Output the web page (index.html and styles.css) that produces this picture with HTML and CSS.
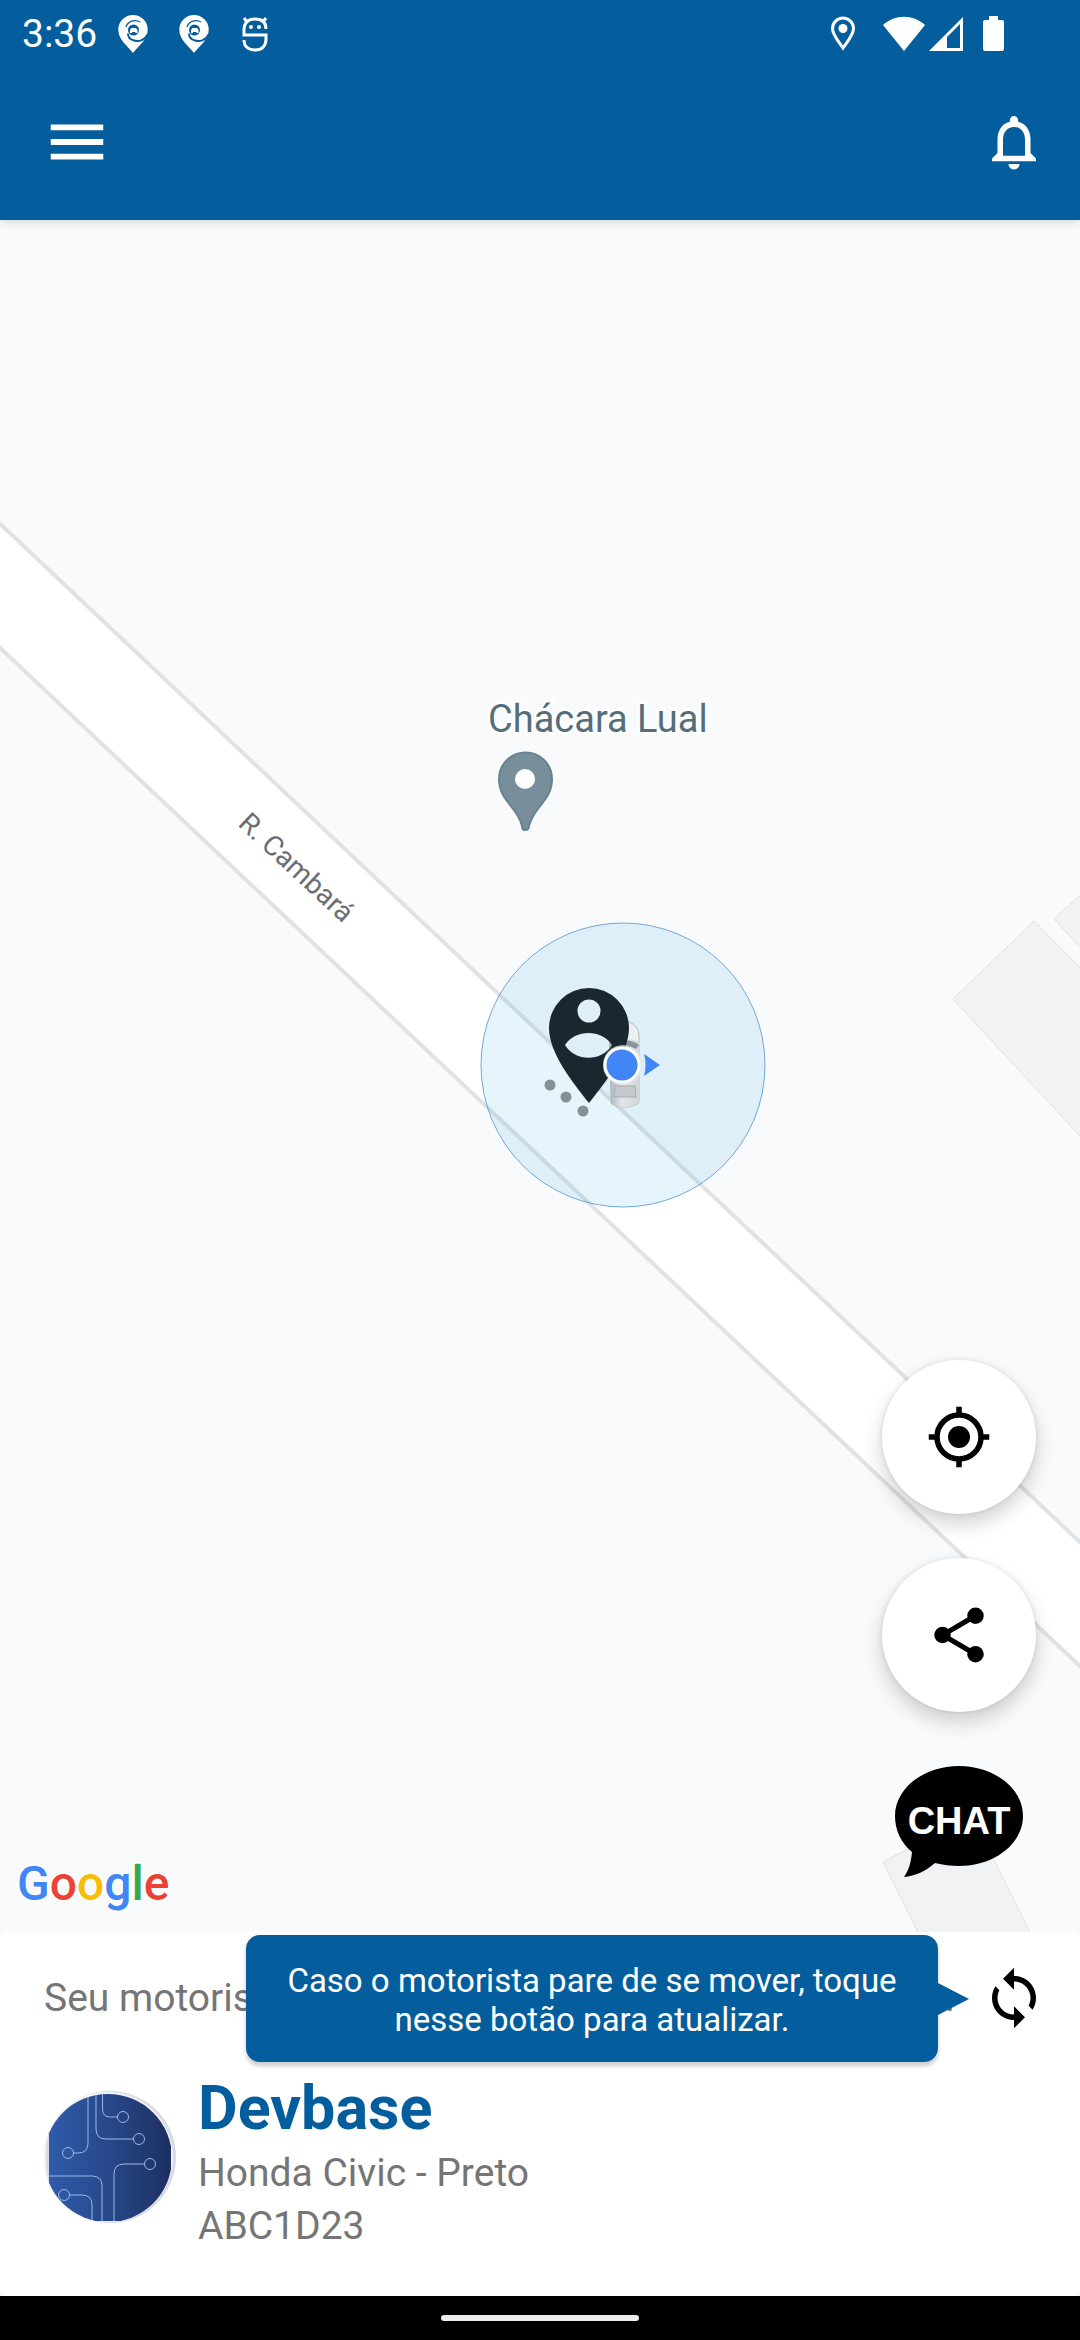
FILE: index.html
```
<!DOCTYPE html>
<html lang="pt-BR">
<head>
  <meta charset="UTF-8">
  <meta name="viewport" content="width=device-width, initial-scale=1.0">
  <title>Devbase</title>
  <link rel="stylesheet" href="styles.css">
</head>
<body>
  <header class="header">
    <div class="status-bar">
      <span class="clock">3:36</span>
      <div class="status-left">
        <svg class="status-icon" viewBox="0 0 38 38">
          <path fill="#fff" d="M19 38C14 31 4.300 25 4.300 14.700a14.700 14.700 0 0 1 29.400 0C33.700 25 24 31 19 38z"/>
          <path fill="none" stroke="#045e9e" stroke-width="1.300" d="M12 12c2-6 9-8 14-5"/>
          <path fill="none" stroke="#045e9e" stroke-width="2" d="M34 19c-3 6-9 8-14 6.500-4-1-6-4-6-7"/>
          <circle cx="19.500" cy="15" r="5.500" fill="#045e9e"/>
          <path fill="#fff" d="M16 18v-3l1.500-2h4.500l1.500 2v3h-2v-1h-3.500v1z"/>
        </svg>
        <svg class="status-icon" viewBox="0 0 38 38">
          <path fill="#fff" d="M19 38C14 31 4.300 25 4.300 14.700a14.700 14.700 0 0 1 29.400 0C33.700 25 24 31 19 38z"/>
          <path fill="none" stroke="#045e9e" stroke-width="1.300" d="M12 12c2-6 9-8 14-5"/>
          <path fill="none" stroke="#045e9e" stroke-width="2" d="M34 19c-3 6-9 8-14 6.500-4-1-6-4-6-7"/>
          <circle cx="19.500" cy="15" r="5.500" fill="#045e9e"/>
          <path fill="#fff" d="M16 18v-3l1.500-2h4.500l1.500 2v3h-2v-1h-3.500v1z"/>
        </svg>
        <svg class="status-icon" viewBox="0 0 38 38">
          <g fill="none" stroke="#fff" stroke-width="3">
            <path d="M30 14c0-7-4-10-11-10S8 8 8 15v5h22v4c0 7-4 11-11 11S8 31 8 25"/>
            <path d="M11 7L8 3M27 7l3-4"/>
          </g>
          <circle cx="15" cy="12" r="2" fill="#fff"/>
          <circle cx="23" cy="12" r="2" fill="#fff"/>
        </svg>
      </div>
      <div class="status-right">
        <svg width="26" height="36" viewBox="0 0 26 36">
          <path fill="none" stroke="#fff" stroke-width="3" d="M13 32C9 26 2.500 19 2.500 12.500a10.500 10.500 0 0 1 21 0C23.500 19 17 26 13 32z"/>
          <circle cx="13" cy="12.500" r="4.500" fill="#fff"/>
        </svg>
        <svg class="wifi" width="42" height="36" viewBox="0 0 42 36">
          <path fill="#fff" d="M21 35L0 9C12-2 30-2 42 9z"/>
        </svg>
        <svg class="signal" width="34" height="36" viewBox="0 0 34 36">
          <path fill="#fff" fill-rule="evenodd" d="M34 1v34H0zM31 8L18 21v11h13z"/>
        </svg>
        <svg width="22" height="36" viewBox="0 0 22 36">
          <path fill="#fff" d="M6 0h9v4h4q2 0 2 2v27q0 2-2 2H2q-2 0-2-2V6q0-2 2-2h4z"/>
        </svg>
      </div>
    </div>
    <div class="app-bar">
      <button class="icon-button" type="button" aria-label="Menu">
        <svg class="icon-menu" viewBox="0 0 24 24"><path fill="#fff" d="M3 18h18v-2H3v2zm0-5h18v-2H3v2zm0-7v2h18V6H3z"/></svg>
      </button>
      <button class="icon-button" type="button" aria-label="Notificações">
        <svg class="icon" viewBox="0 0 24 24"><path fill="#fff" d="M12 22c1.100 0 2-.9 2-2h-4c0 1.100.9 2 2 2zm6-6v-5c0-3.070-1.630-5.640-4.500-6.320V4c0-.83-.67-1.500-1.500-1.500s-1.500.67-1.500 1.500v.68C7.640 5.360 6 7.920 6 11v5l-2 2v1h16v-1l-2-2zm-2 1H8v-6c0-2.480 1.510-4.500 4-4.500s4 2.020 4 4.500v6z"/></svg>
      </button>
    </div>
  </header>

  <main class="map">
    <svg class="map-canvas" viewBox="0 0 1080 1712" preserveAspectRatio="xMidYMid slice">
      <defs>
        <linearGradient id="car" x1="0" x2="1" y1="0" y2="0">
          <stop offset="0" stop-color="#a9afb5"/>
          <stop offset=".4" stop-color="#e4e7ea"/>
          <stop offset="1" stop-color="#cfd4d9"/>
        </linearGradient>
      </defs>

      <!-- prédios -->
      <g fill="#f1f2f3" stroke="#dfe1e3" stroke-width="1">
        <path d="M953 779l81-78 56 57v169z"/>
        <path d="M1054 699l36-33v72z"/>
        <path d="M883 1642l89-46 63 126H923z"/>
      </g>

      <!-- rua -->
      <path fill="#fff" stroke="#e0e2e4" stroke-width="4" d="M-20 285L1100 1341v124L-20 409z"/>
      <text class="street" transform="translate(237 605) rotate(43)">R. Cambará</text>

      <!-- local -->
      <text class="place" x="488" y="512">Chácara Lual</text>
      <path fill="#788f9b" stroke="#678290" stroke-width="2" d="M525 610c-2 0-3-2-3-4-4-19-23-25-23-47a26.500 26.500 0 0 1 53 0c0 22-19 28-23 47 0 2-1 4-4 4z"/>
      <circle cx="525" cy="559" r="10" fill="#fff"/>

      <circle cx="623" cy="845" r="142" fill="#1e9adf" fill-opacity=".11" stroke="#3f86c6" stroke-opacity=".7"/>

      <!-- carro -->
      <path fill="#edf0f3" stroke="#b4babf" d="M611 815c2-18 26-18 28 0v66c0 8-28 8-28 0z"/>
      <path fill="url(#car)" d="M609 822c8-4 22-4 31 0l-1 62c-6 4-23 4-28 0z"/>
      <path fill="#8b939a" d="M612 825c8-6 20-6 27 0l-3 4c-6-3-15-3-21 0z"/>
      <path fill="#c4c9cd" stroke="#a5abb0" d="M615 866h20l1 11h-22z"/>

      <!-- passageiro -->
      <g fill="#84919a">
        <circle cx="550" cy="865" r="5.500"/>
        <circle cx="566" cy="877" r="5.500"/>
        <circle cx="583" cy="891" r="5.500"/>
      </g>
      <path fill="#1b272e" fill-rule="evenodd" d="M589 883c-16-20-40-50-40-75a40 40 0 0 1 80 0c0 25-24 55-40 75zM589 779.500a11.500 11.500 0 1 0 0 23 11.500 11.500 0 0 0 0-23zM565 825c10 17 37 17 47 0-10-16-37-16-47 0z"/>

      <!-- posição atual -->
      <path fill="#4285f4" d="M644 834l16 11-16 11q3-11 0-22z"/>
      <circle cx="623" cy="845" r="20" fill="#dfe5ea" fill-opacity=".7"/>
      <circle cx="622" cy="845" r="17" fill="#4285f4" stroke="#fff" stroke-width="3"/>

      <text class="google" x="17" y="1680"><tspan fill="#4285f4">G</tspan><tspan fill="#ea4335">o</tspan><tspan fill="#fbbc05">o</tspan><tspan fill="#4285f4">g</tspan><tspan fill="#34a853">l</tspan><tspan fill="#ea4335">e</tspan></text>
    </svg>

    <div class="map-actions">
      <button class="fab" type="button" aria-label="Minha localização">
        <svg class="icon" viewBox="0 0 24 24">
          <circle cx="12" cy="12" r="4"/>
          <circle cx="12" cy="12" r="8" fill="none" stroke="#000" stroke-width="2"/>
          <path d="M11 1h2v3h-2zM11 20h2v3h-2zM1 11h3v2H1zM20 11h3v2h-3z"/>
        </svg>
      </button>
      <button class="fab" type="button" aria-label="Compartilhar">
        <svg class="icon" viewBox="0 0 24 24">
          <path fill="none" stroke="#000" stroke-width="1.800" d="M18 5L6 12l12 7"/>
          <circle cx="18" cy="5" r="3"/>
          <circle cx="6" cy="12" r="3"/>
          <circle cx="18" cy="19" r="3"/>
        </svg>
      </button>
      <button class="chat" type="button">
        <svg width="128" height="112" viewBox="0 0 128 112">
          <path d="M64 0c35 0 64 22 64 50s-29 50-64 50c-8 0-16-1-24-3-9 8-20 13-31 14 5-7 7-15 8-25C6 77 0 64 0 50 0 22 29 0 64 0z"/>
          <text class="chat-text" x="64" y="68" text-anchor="middle">CHAT</text>
        </svg>
      </button>
    </div>
  </main>

  <section class="panel">
    <div class="panel-status">
      <p class="message"><span>Seu motorista</span><span>.</span></p>
      <button class="icon-button" type="button" aria-label="Atualizar">
        <svg class="icon" viewBox="0 0 24 24"><path d="M12 4V1L8 5l4 4V6c3.310 0 6 2.690 6 6 0 1.010-.25 1.970-.7 2.800l1.460 1.460C19.540 15.030 20 13.570 20 12c0-4.420-3.580-8-8-8zm0 14c-3.310 0-6-2.690-6-6 0-1.010.25-1.970.7-2.800L5.240 7.740C4.460 8.970 4 10.430 4 12c0 4.420 3.580 8 8 8v3l4-4-4-4v3z"/></svg>
      </button>
      <div class="tooltip" role="tooltip">Caso o motorista pare de se mover, toque nesse botão para atualizar.</div>
    </div>
    <div class="driver">
      <svg class="avatar" viewBox="0 0 132 132">
        <defs>
          <linearGradient id="photo">
            <stop offset="0" stop-color="#2f5baa"/>
            <stop offset=".5" stop-color="#27488a"/>
            <stop offset="1" stop-color="#1e2f61"/>
          </linearGradient>
          <clipPath id="round"><circle cx="64" cy="67" r="64"/></clipPath>
        </defs>
        <circle cx="66" cy="66" r="66" fill="#d9dbe2"/>
        <circle cx="64" cy="66" r="65" fill="#f4f5fa"/>
        <path d="M5 39Q-2 66 5 93z" fill="#d9dbe2"/>
        <g clip-path="url(#round)">
          <rect x="5" y="3" width="122" height="127" fill="url(#photo)"/>
          <g fill="none" stroke="#9db8e6" stroke-width="1">
            <path d="M44 3v49q0 10-10 10h-5M52 3v35q0 10 10 10h27M58.500 3v15q0 8 8 8h7M5 85h43q10 0 10 10v35M26 104h12q10 0 10 10v16M100 73H80q-10 0-10 10v47"/>
            <circle cx="24" cy="62" r="5.500"/>
            <circle cx="95" cy="48" r="5.500"/>
            <circle cx="79" cy="26" r="5.500"/>
            <circle cx="20" cy="104" r="5.500"/>
            <circle cx="106" cy="73" r="5.500"/>
          </g>
        </g>
      </svg>
      <div>
        <h1 class="driver-name">Devbase</h1>
        <p class="driver-info">Honda Civic - Preto</p>
        <p class="driver-info">ABC1D23</p>
      </div>
    </div>
  </section>

  <footer class="nav-bar"><div class="nav-handle"></div></footer>
</body>
</html>
```
FILE: styles.css
```
* {
  box-sizing: border-box;
}
body {
  margin: 0;
  min-height: 100vh;
  display: flex;
  flex-direction: column;
  font-family: Roboto, "Liberation Sans", sans-serif;
  font-size: 39px;
  background-color: #f8fafc;
  color: #757575;
}
h1, p {
  margin: 0;
}
svg {
  display: block;
}
button {
  border: none;
  padding: 0;
  background: none;
  cursor: pointer;
}

/* topo */
.header {
  position: relative;
  z-index: 1;
  padding-bottom: 4px;
  background-color: #045e9e; /* azul */
  color: #fff;
  box-shadow: 0 2px 10px rgba(0, 0, 0, 0.15);
}
.status-bar {
  display: flex;
  align-items: center;
  height: 68px;
  padding: 0 75px 0 22px;
}
.status-left {
  display: flex;
  gap: 23px;
  margin-left: 17px;
}
.status-icon {
  width: 38px;
  height: 38px;
}
.status-right {
  display: flex;
  align-items: center;
  margin-left: auto;
}
.wifi {
  margin-left: 27px;
}
.signal {
  margin: 0 20px 0 4px;
}
.app-bar {
  display: flex;
  align-items: center;
  justify-content: space-between;
  height: 148px;
  padding: 0 33px 0 42px;
}
.icon {
  width: 66px;
  height: 66px;
}
.icon-menu {
  width: 70px;
  height: 70px;
}

/* mapa */
.map {
  position: relative;
  flex: 1;
  display: flex;
  flex-direction: column;
  align-items: flex-end;
  justify-content: flex-end;
  padding: 44px;
  overflow: hidden;
}
.map-canvas {
  position: absolute;
  inset: 0;
  width: 100%;
  height: 100%;
}
.street {
  font-size: 28px;
  fill: #6b6e72;
}
.place {
  font-size: 38px;
  fill: #546e7a;
  stroke: #fff;
  stroke-width: 5px;
  paint-order: stroke;
}
.google {
  font-size: 48px;
  font-weight: 500;
  stroke: #fff;
  stroke-width: 3px;
  paint-order: stroke;
}
.map-actions {
  position: relative;
  display: flex;
  flex-direction: column;
  gap: 44px;
}
.fab {
  display: flex;
  align-items: center;
  justify-content: center;
  width: 154px;
  height: 154px;
  border-radius: 50%;
  background-color: #fff;
  box-shadow: 0 10px 20px rgba(0, 0, 0, 0.18), 0 0 5px rgba(0, 0, 0, 0.1);
}
.chat {
  display: flex;
  align-items: center;
  justify-content: center;
  height: 132px;
}
.chat-text {
  font-family: "Liberation Sans", Arial, sans-serif;
  font-size: 38px;
  font-weight: bold;
  fill: #fff;
}

/* motorista */
.panel {
  padding: 33px 33px 43px 44px;
  border-radius: 8px;
  background-color: #fff;
}
.panel-status {
  position: relative;
  display: flex;
  align-items: center;
  justify-content: space-between;
  margin-bottom: 38px;
}
.message {
  flex: 1;
  display: flex;
  justify-content: space-between;
  margin-right: 26px;
}
.tooltip {
  position: absolute;
  top: -30px;
  right: 109px;
  width: 692px;
  padding: 26px 36px 23px;
  border-radius: 14px;
  background-color: #045e9e;
  box-shadow: 0 4px 4px rgba(0, 0, 0, 0.2);
  color: #fff;
  font-size: 33px;
  line-height: 39px;
  text-align: center;
}
.tooltip::after {
  content: "";
  position: absolute;
  top: 48px;
  left: 100%;
  border: 16px solid transparent;
  border-left: 31px solid #045e9e;
  border-right: none;
}
.driver {
  display: flex;
  align-items: flex-start;
  gap: 22px;
}
.avatar {
  width: 132px;
  height: 132px;
  margin-top: 22px;
}
.driver-name {
  font-size: 61px;
  line-height: 78px;
  color: #045e9e;
}
.driver-info {
  line-height: 53px;
}

/* barra do sistema */
.nav-bar {
  display: flex;
  align-items: center;
  justify-content: center;
  height: 44px;
  background-color: #000;
}
.nav-handle {
  width: 198px;
  height: 6px;
  border-radius: 3px;
  background-color: #ececec;
}
```
